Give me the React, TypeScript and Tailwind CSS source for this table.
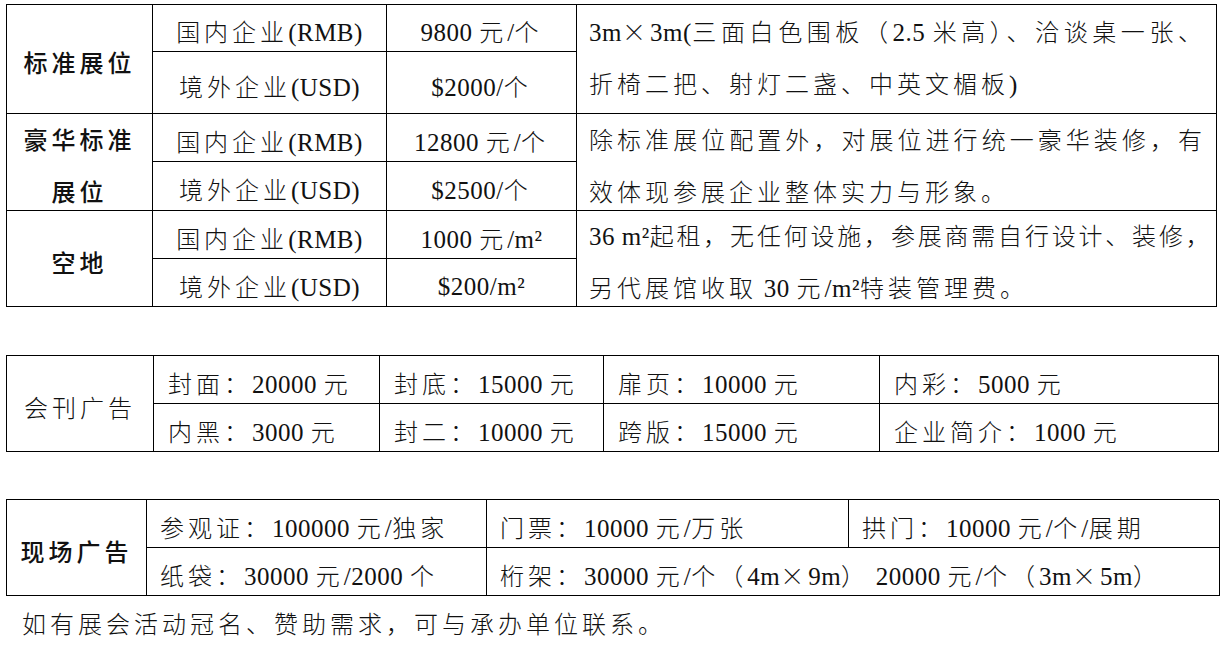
import React from "react";

const CJK = /([\u2E80-\u9FFF\uFF00-\uFFEF\u00D7]+)/;

function T({ s, bold = false, tight = false }: { s: string; bold?: boolean; tight?: boolean }) {
  const parts = s.split(CJK).filter((p) => p.length > 0);
  return (
    <>
      {parts.map((p, i) =>
        CJK.test(p) ? (
          <span
            key={i}
            className={
              bold
                ? "font-['Noto_Sans_CJK_SC',sans-serif] text-[24px] tracking-[4px] font-medium"
                : tight
                ? "font-['Noto_Sans_CJK_SC',sans-serif] text-[24px] tracking-[2.8px] font-light"
                : "font-['Noto_Sans_CJK_SC',sans-serif] text-[24px] tracking-[4px] font-light"
            }
          >
            {p}
          </span>
        ) : (
          <span key={i} className="font-['Liberation_Serif',serif] text-[25px] tracking-[0.5px]">
            {p}
          </span>
        )
      )}
    </>
  );
}

const cellBase = "flex items-center border-r border-b border-black whitespace-nowrap";

function CenterCell({ s, bold = false, span2 = false }: { s: string; bold?: boolean; span2?: boolean }) {
  return (
    <div className={(span2 ? "row-span-2 " : "") + cellBase + " justify-center pt-[10px]"}>
      <div className="leading-[30px]">
        <T s={s} bold={bold} />
      </div>
    </div>
  );
}

function LeftCell({ s, pad = "t2", colSpan2 = false }: { s: string; pad?: string; colSpan2?: boolean }) {
  return (
    <div
      className={
        (colSpan2 ? "col-span-2 " : "") +
        cellBase +
        (pad === "t2" ? " justify-start pt-[10px] pl-[14px]" : " justify-start pt-[10px] pl-[13px]")
      }
    >
      <div className="leading-[30px]">
        <T s={s} />
      </div>
    </div>
  );
}

function Desc({ l1, l2, pt, tight = false }: { l1: string; l2: string; pt: string; tight?: boolean }) {
  return (
    <div className={"row-span-2 flex flex-col justify-center border-r border-b border-black pl-[12px] pr-[10px] whitespace-nowrap " + pt}>
      <div className="leading-[48px] text-justify [text-align-last:justify]">
        <T s={l1} tight={tight} />
      </div>
      <div className="leading-[48px]">
        <T s={l2} />
      </div>
    </div>
  );
}

export default function App() {
  return (
    <div className="w-[1225px] min-h-[646px] bg-white pt-[4px] pl-[6px] text-[#111]">
      {/* Table 1 */}
      <div className="grid w-[1211px] grid-cols-[146px_234px_190px_640px] grid-rows-[47px_62px_48px_49px_48px_48px] border-l border-t border-black">
        <CenterCell s="标准展位" bold span2 />
        <CenterCell s="国内企业(RMB)" />
        <CenterCell s="9800 元/个" />
        <Desc
          l1="3m×3m(三面白色围板（2.5 米高）、洽谈桌一张、"
          l2="折椅二把、射灯二盏、中英文楣板)"
          pt="pt-0"
        />
        <CenterCell s="境外企业(USD)" />
        <CenterCell s="$2000/个" />

        <div className={"row-span-2 " + cellBase + " justify-center pt-[9px]"}>
          <div className="flex flex-col items-center">
            <div className="leading-[48px]">
              <T s="豪华标准" bold />
            </div>
            <div className="leading-[48px]">
              <T s="展位" bold />
            </div>
          </div>
        </div>
        <CenterCell s="国内企业(RMB)" />
        <CenterCell s="12800 元/个" />
        <Desc
          l1="除标准展位配置外，对展位进行统一豪华装修，有"
          l2="效体现参展企业整体实力与形象。"
          pt="pt-[10px]"
        />
        <CenterCell s="境外企业(USD)" />
        <CenterCell s="$2500/个" />

        <CenterCell s="空地" bold span2 />
        <CenterCell s="国内企业(RMB)" />
        <CenterCell s="1000 元/m²" />
        <Desc
          l1="36 m²起租，无任何设施，参展商需自行设计、装修，"
          l2="另代展馆收取 30 元/m²特装管理费。"
          pt="pt-[9px]"
          tight
        />
        <CenterCell s="境外企业(USD)" />
        <CenterCell s="$200/m²" />
      </div>

      {/* Table 2 */}
      <div className="mt-[48px] grid w-[1213px] grid-cols-[147px_226px_224px_276px_339px] grid-rows-[48px_48px] border-l border-t border-black">
        <CenterCell s="会刊广告" span2 />
        <LeftCell s="封面：20000 元" />
        <LeftCell s="封底：15000 元" />
        <LeftCell s="扉页：10000 元" />
        <LeftCell s="内彩：5000 元" />
        <LeftCell s="内黑：3000 元" />
        <LeftCell s="封二：10000 元" />
        <LeftCell s="跨版：15000 元" />
        <LeftCell s="企业简介：1000 元" />
      </div>

      {/* Table 3 */}
      <div className="mt-[47px] grid w-[1213px] grid-cols-[140px_340px_362px_371px] grid-rows-[48px_48px] border-l border-t border-black">
        <CenterCell s="现场广告" bold span2 />
        <LeftCell s="参观证：100000 元/独家" pad="t3" />
        <LeftCell s="门票：10000 元/万张" pad="t3" />
        <LeftCell s="拱门：10000 元/个/展期" pad="t3" />
        <LeftCell s="纸袋：30000 元/2000 个" pad="t3" />
        <LeftCell s="桁架：30000 元/个（4m×9m） 20000 元/个（3m×5m）" pad="t3" colSpan2 />
      </div>

      <div className="mt-[9px] pl-[16px] leading-[36px] whitespace-nowrap">
        <T s="如有展会活动冠名、赞助需求，可与承办单位联系。" />
      </div>
    </div>
  );
}
